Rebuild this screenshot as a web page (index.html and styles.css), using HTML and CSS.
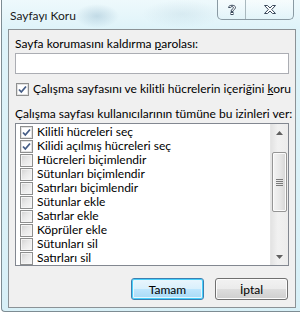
FILE: index.html
```html
<!DOCTYPE html>
<html>
<head>
  <meta charset="utf-8">
  <meta name="viewport" content="width=device-width">
  <title>Sayfayı Koru</title>
  <link rel="stylesheet" href="styles.css">
</head>
<body>
  <section class="window">
    <div class="titleBar">
      <span class="title">Sayfayı Koru</span>
      <div class="captionButtons">
        <div class="capBtn capHelp">
          <svg width="12" height="13" viewBox="0 0 12 13">
            <path d="M2.5 4.5 C2.5 1.5 9.5 1.5 9.5 4.5 C9.5 6.5 7 6.5 7 8.5 L5 8.5 C5 6 7.5 6 7.5 4.6 C7.5 3.3 4.5 3.3 4.5 4.5 Z" fill="#fff" stroke="#3b4a5c" stroke-width="1"/>
            <rect x="5" y="9.5" width="2" height="2" fill="#fff" stroke="#3b4a5c" stroke-width="1"/>
          </svg>
        </div>
        <div class="capBtn capClose">
          <svg width="14" height="11" viewBox="0 0 14 11">
            <path d="M1.5 1.5 L4.5 1.5 L7 4 L9.5 1.5 L12.5 1.5 L8.7 5.5 L12.5 9.5 L9.5 9.5 L7 7 L4.5 9.5 L1.5 9.5 L5.3 5.5 Z" fill="#fff" stroke="#3b4a5c" stroke-width="1" stroke-linejoin="round"/>
          </svg>
        </div>
      </div>
    </div>
    <div class="client">
      <div class="label labelPass">Sayfa korumasını kaldırma <u>p</u>arolası:</div>
      <div class="textBox"></div>
      <div class="checkRow mainCheck">
        <span class="check checked"></span>
        <span>Çalışma sayfasını ve kilitli hücrelerin içeriğini <u>k</u>oru</span>
      </div>
      <div class="label labelList">Çalışma sayfası kullanıcılarının tümüne bu izinleri ver:</div>
      <div class="listBox">
        <div class="items">
          <div class="checkRow item"><span class="check checked"></span><span>Kilitli hücreleri seç</span></div>
          <div class="checkRow item"><span class="check checked"></span><span>Kilidi açılmış hücreleri seç</span></div>
          <div class="checkRow item"><span class="check"></span><span>Hücreleri biçimlendir</span></div>
          <div class="checkRow item"><span class="check"></span><span>Sütunları biçimlendir</span></div>
          <div class="checkRow item"><span class="check"></span><span>Satırları biçimlendir</span></div>
          <div class="checkRow item"><span class="check"></span><span>Sütunlar ekle</span></div>
          <div class="checkRow item"><span class="check"></span><span>Satırlar ekle</span></div>
          <div class="checkRow item"><span class="check"></span><span>Köprüler ekle</span></div>
          <div class="checkRow item"><span class="check"></span><span>Sütunları sil</span></div>
          <div class="checkRow item"><span class="check"></span><span>Satırları sil</span></div>
        </div>
        <div class="scrollBar">
          <div class="arrow">
            <svg width="7" height="4" viewBox="0 0 7 4"><path d="M0 4 L3.5 0 L7 4 Z" fill="#606060"/></svg>
          </div>
          <div class="track">
            <div class="thumb">
              <svg width="7" height="7" viewBox="0 0 7 7">
                <path d="M0 0.5 H7 M0 2.5 H7 M0 4.5 H7 M0 6.5 H7" stroke="#7a7a7a" stroke-width="1"/>
              </svg>
            </div>
          </div>
          <div class="arrow">
            <svg width="7" height="4" viewBox="0 0 7 4"><path d="M0 0 L7 0 L3.5 4 Z" fill="#606060"/></svg>
          </div>
        </div>
      </div>
      <div class="buttons">
        <button class="btn btnDefault">Tamam</button>
        <button class="btn">İptal</button>
      </div>
    </div>
  </section>
</body>
</html>
```

FILE: styles.css
```css
html, body {
  margin: 0;
  padding: 0;
}

body {
  width: 300px;
  height: 314px;
  overflow: hidden;
  background: #ffffff;
  font-family: Lato, "Liberation Sans", sans-serif;
  font-size: 12px;
  color: #000000;
}

.window {
  box-sizing: border-box;
  width: 299px;
  height: 312px;
  margin-left: 1px;
  padding: 0 4px 0 6px;
  border-left: 1px solid #7d8c93;
  border-bottom: 1px solid #7d8c93;
  border-bottom-left-radius: 4px;
  background:
    radial-gradient(ellipse 22px 12px at 95px 16px, rgba(150,185,205,0.45), rgba(150,185,205,0)),
    radial-gradient(ellipse 40px 14px at 180px 14px, rgba(170,200,215,0.25), rgba(170,200,215,0)),
    linear-gradient(to bottom, #eef9fc 0px, #def3f9 30px, #d8f0f7 100%);
}

.titleBar {
  display: flex;
  justify-content: space-between;
  height: 29px;
}

.title {
  display: block;
  margin-left: 2px;
  padding-top: 8px;
  line-height: 16px;
  color: #1a1a1a;
}

.captionButtons {
  display: flex;
  height: 20px;
  margin-right: 2px;
  border: 1px solid #8a9aa3;
  border-top: none;
  border-radius: 0 0 5px 5px;
  box-sizing: border-box;
  background: linear-gradient(to bottom, rgba(255,255,255,0.5), rgba(220,240,246,0.3));
}

.capBtn {
  display: flex;
  justify-content: center;
  align-items: center;
  height: 19px;
}

.capHelp {
  width: 27px;
  border-right: 1px solid #a9b8be;
}

.capClose {
  width: 47px;
}

.client {
  box-sizing: border-box;
  width: 288px;
  height: 279px;
  padding: 0 6px;
  background: #f0f0f0;
  border: 1px solid #8b9296;
}

.label {
  line-height: 16px;
  white-space: nowrap;
}

.labelPass {
  margin-top: 6px;
}

.textBox {
  box-sizing: border-box;
  height: 21px;
  margin-top: 1px;
  background: #ffffff;
  border: 1px solid #abadb3;
}

.checkRow {
  display: flex;
  align-items: center;
  white-space: nowrap;
}

.mainCheck {
  height: 16px;
  line-height: 16px;
  margin-top: 7px;
}

.mainCheck .check {
  margin-left: 1px;
  margin-right: 4px;
}

.labelList {
  margin-top: 9px;
}

.check {
  box-sizing: border-box;
  flex: none;
  width: 13px;
  height: 13px;
  border: 1px solid #8e8f8f;
  background: linear-gradient(135deg, #d0d0d0 0%, #e8e8e8 45%, #f8f8f8 100%);
  box-shadow: inset 0 0 0 1px #f4f4f4;
}

.check.checked {
  background: #ffffff url("data:image/svg+xml;utf8,<svg xmlns='http://www.w3.org/2000/svg' width='11' height='11' viewBox='0 0 11 11'><path d='M2 5.5 L4.3 8 L9 2.5' fill='none' stroke='%23455d86' stroke-width='1.8'/></svg>") no-repeat center;
  box-shadow: inset 0 0 0 1px #e2e2e2;
}

.listBox {
  box-sizing: border-box;
  display: flex;
  height: 143px;
  margin-top: 1px;
  background: #ffffff;
  border: 1px solid #828790;
}

.items {
  flex: 1;
  padding-top: 1px;
  overflow: hidden;
}

.item {
  height: 14px;
  line-height: 14px;
  padding-left: 4px;
}

.item .check {
  margin-right: 4px;
}

.scrollBar {
  display: flex;
  flex-direction: column;
  width: 17px;
  background: linear-gradient(to right, #e3e3e3, #f1f1f1 40%, #ececec);
  border-left: 1px solid #e6e6e6;
}

.arrow {
  display: flex;
  justify-content: center;
  align-items: center;
  height: 17px;
  flex: none;
}

.track {
  flex: 1;
  padding-top: 11px;
}

.thumb {
  box-sizing: border-box;
  display: flex;
  justify-content: center;
  align-items: center;
  width: 15px;
  height: 60px;
  margin-left: 1px;
  border: 1px solid #959595;
  border-radius: 2px;
  background: linear-gradient(to right, #f3f3f3, #e8e8e8 50%, #d6d6d6);
  box-shadow: inset 0 0 0 1px #fbfbfb;
}

.buttons {
  display: flex;
  justify-content: flex-end;
  gap: 11px;
  margin-top: 12px;
  padding-right: 1px;
}

.btn {
  box-sizing: border-box;
  width: 73px;
  height: 22px;
  padding: 0;
  font-family: Lato, "Liberation Sans", sans-serif;
  font-size: 12px;
  color: #000000;
  border: 1px solid #707070;
  border-radius: 3px;
  background: linear-gradient(to bottom, #f2f2f2 0%, #ebebeb 50%, #dddddd 51%, #cfcfcf 100%);
  box-shadow: inset 0 0 0 1px #fcfcfc;
}

.btnDefault {
  border-color: #3c7fb1;
  box-shadow: inset 0 0 0 1px #48d0fc, inset 0 0 0 2px #e6f6fd;
  background: linear-gradient(to bottom, #eaf6fd 0%, #d9f0fc 50%, #bee6fd 51%, #a7d9f5 100%);
}
```
